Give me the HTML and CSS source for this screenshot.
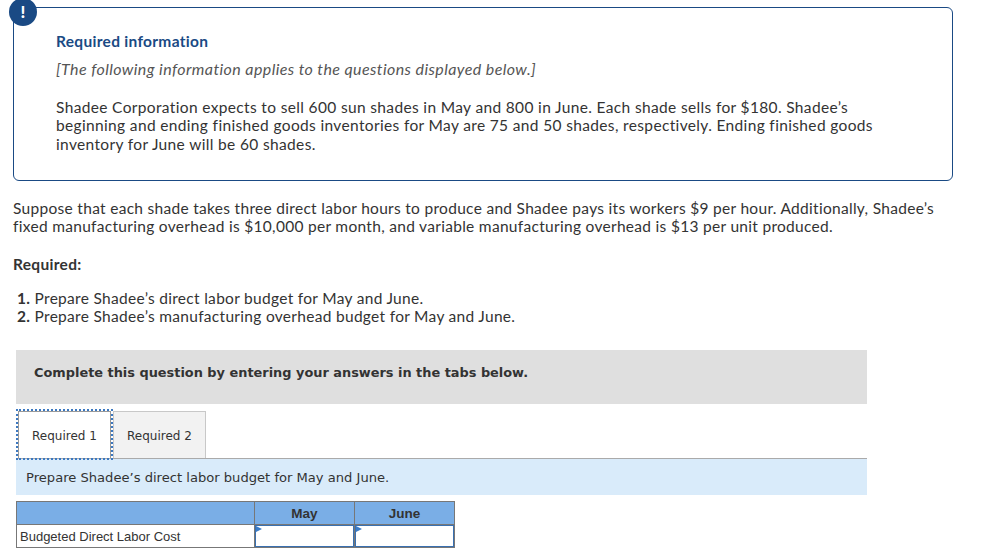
FILE: index.html
```html
<!DOCTYPE html>
<html lang="en">
<head>
  <meta charset="UTF-8">
  <title>Required information</title>
  <link rel="stylesheet" href="styles.css">
</head>
<body>

  <div class="info-box">
    <div class="info-icon">!</div>
    <h2 class="info-title">Required information</h2>
    <p class="info-note">[The following information applies to the questions displayed below.]</p>
    <p class="info-text">Shadee Corporation expects to sell 600 sun shades in May and 800 in June. Each shade sells for $180. Shadee’s beginning and ending finished goods inventories for May are 75 and 50 shades, respectively. Ending finished goods inventory for June will be 60 shades.</p>
  </div>

  <p class="question">Suppose that each shade takes three direct labor hours to produce and Shadee pays its workers $9 per hour. Additionally, Shadee’s fixed manufacturing overhead is $10,000 per month, and variable manufacturing overhead is $13 per unit produced.</p>

  <p class="required-label">Required:</p>
  <ol class="required-list">
    <li><b>1.</b> Prepare Shadee’s direct labor budget for May and June.</li>
    <li><b>2.</b> Prepare Shadee’s manufacturing overhead budget for May and June.</li>
  </ol>

  <div class="complete-bar">Complete this question by entering your answers in the tabs below.</div>

  <div class="tabs">
    <div class="tab active">Required 1</div>
    <div class="tab">Required 2</div>
  </div>
  <div class="tab-prompt">Prepare Shadee’s direct labor budget for May and June.</div>

  <table class="budget">
    <tr>
      <th class="label-col"></th>
      <th class="num-col">May</th>
      <th class="num-col">June</th>
    </tr>
    <tr>
      <td>Budgeted Direct Labor Cost</td>
      <td class="input-cell"></td>
      <td class="input-cell"></td>
    </tr>
  </table>

</body>
</html>
```

FILE: styles.css
```css
body {
  margin: 0;
  padding: 7px 0 0;
  font-family: 'Lato', sans-serif;
  font-size: 15.5px;
  letter-spacing: 0.3px;
  color: #333;
  background-color: #fff;
  height: 550px;
  overflow: hidden;
}

p {
  margin: 0;
}

.info-box {
  position: relative;
  box-sizing: border-box;
  width: 940px;
  height: 174px;
  margin-left: 13px;
  padding: 24px 70px 0 42px;
  border: 1px solid #1a4a84;
  border-radius: 6px;
}

.info-icon {
  position: absolute;
  top: -10px;
  left: -5px;
  width: 28px;
  height: 28px;
  border-radius: 50%;
  background-color: #1a4a84;
  color: #fff;
  font-weight: 900;
  font-size: 17px;
  line-height: 28px;
  text-align: center;
}

.info-title {
  margin: 0;
  font-size: 15.5px;
  letter-spacing: 0.3px;
  font-weight: bold;
  line-height: 18px;
  color: #1a4a84;
}

.info-note {
  margin-top: 10px;
  font-size: 16px;
  letter-spacing: 0.41px;
  font-style: italic;
  line-height: 18px;
  color: #555;
}

.info-text {
  margin-top: 20px;
  letter-spacing: 0.35px;
  line-height: 18.4px;
}

.question {
  margin: 18px 0 0 13px;
  width: 940px;
  line-height: 18px;
}

.required-label {
  margin: 20px 0 0 13px;
  font-weight: bold;
  line-height: 18px;
}

.required-list {
  margin: 16px 0 0 17px;
  padding: 0;
  list-style: none;
  line-height: 18px;
}

.complete-bar {
  box-sizing: border-box;
  width: 851px;
  height: 54px;
  margin: 25px 0 0 16px;
  padding-left: 18px;
  background-color: #dfdfdf;
  font-family: 'DejaVu Sans', sans-serif;
  font-size: 12.9px;
  letter-spacing: 0;
  font-weight: bold;
  line-height: 45px;
}

.tabs {
  display: flex;
  margin: 7px 0 0 16px;
  width: 851px;
  height: 47px;
  border-bottom: 1px solid #aaa;
}

.tab {
  box-sizing: border-box;
  width: 93px;
  height: 47px;
  border: 1px solid #c8c8c8;
  border-bottom: none;
  background-color: #f2f2f2;
  font-family: 'DejaVu Sans', sans-serif;
  font-size: 12px;
  letter-spacing: 0;
  line-height: 48px;
  text-align: center;
}

.tab.active {
  margin: 0 2px;
  background-color: #fff;
  outline: 2px dotted #3c78c0;
  border-color: #999;
}

.tab-prompt {
  width: 841px;
  height: 36px;
  margin-left: 16px;
  padding-left: 10px;
  background-color: #d9ebfa;
  font-family: 'DejaVu Sans', sans-serif;
  font-size: 13.1px;
  letter-spacing: 0;
  line-height: 37px;
}

.budget {
  margin: 6px 0 0 16px;
  border-collapse: collapse;
  table-layout: fixed;
  width: 438px;
  font-family: 'Liberation Sans', sans-serif;
  font-size: 13px;
  letter-spacing: 0;
}

.budget th, .budget td {
  border: 1px solid #777;
  padding: 0 0 0 3px;
  height: 22px;
}

.budget th {
  background-color: #7aaee6;
  font-size: 13.5px;
  padding: 0;
  text-align: center;
}

.label-col {
  width: 237px;
}

.num-col {
  width: 99px;
}

.budget td.input-cell {
  position: relative;
  padding: 0;
  box-shadow: inset 0 0 0 1px #3a70b0;
}

.budget td.input-cell::before {
  content: "";
  position: absolute;
  top: 1px;
  left: 1px;
  border-left: 6px solid #3a7cc8;
  border-top: 3px solid transparent;
  border-bottom: 3px solid transparent;
}
```
